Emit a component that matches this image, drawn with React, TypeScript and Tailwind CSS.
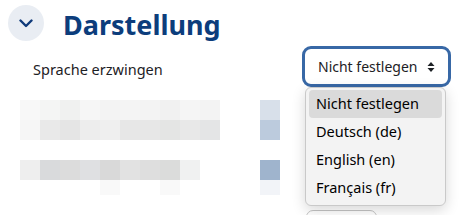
import React from "react";

const row1 = ["#f8f8f8", "#f4f5f4", "#f0f1f0", "#f6f6f6", "#f3f3f3", "#f4f4f4", "#f3f3f3", "#f1f1f1", "#f5f5f5", "#f3f3f3"];
const row2 = ["#f6f6f6", "#e9e9e9", "#e5e5e5", "#ededed", "#efefef", "#e7e7e7", "#e7e7e7", "#e4e5e4", "#e8e8e8", "#e4e5e6"];
const row3 = ["#eeeeee", "#d9dadc", "#dcdcdc", "#dfe0e2", "#d9d9d9", "#e2e2e2", "#dedede", "#dbdcdb", "#f0f1f1", "#ffffff"];
const row4 = ["#ffffff", "#ffffff", "#ffffff", "#ffffff", "#f9f9f9", "#ffffff", "#ffffff", "#f9f9f9", "#ffffff", "#ffffff"];

function BlockRow({ colors, right, h = "h-5" }: { colors: string[]; right: string; h?: string }) {
  return (
    <div className={`flex ${h}`}>
      <div className="w-5" />
      {colors.map((c, i) => (
        <div key={i} className={`w-5 ${h}`} style={{ backgroundColor: c }} />
      ))}
      <div className="w-10" />
      <div className={`w-5 ${h}`} style={{ backgroundColor: right }} />
    </div>
  );
}

export default function App() {
  const items = ["Nicht festlegen", "Deutsch (de)", "English (en)", "Français (fr)"];
  return (
    <div
      className="relative w-[460px] h-[215px] overflow-hidden bg-white text-[#1d2125]"
      style={{ fontFamily: '"Noto Sans", "Open Sans", sans-serif' }}
    >
      {/* Header */}
      <div className="flex items-center pl-2 pt-[5px] h-[41px]">
        <div className="w-9 h-9 rounded-full bg-[#e9edf3] flex items-center justify-center">
          <svg width="14" height="9" viewBox="0 0 14 9" fill="none">
            <path d="M1.5 1.5 L7 7 L12.5 1.5" stroke="#0f3a7a" strokeWidth="2.4" strokeLinecap="round" strokeLinejoin="round" />
          </svg>
        </div>
        <h2 className="ml-[19px] mt-[3px] text-[27px] font-bold leading-none text-[#0c3d7c]">Darstellung</h2>
      </div>

      {/* Form row */}
      <div className="flex items-start mt-[5px]">
        <div className="pl-[33px] pt-[13px] text-[14.5px] leading-5 whitespace-nowrap">Sprache erzwingen</div>
        <div className="ml-auto mr-[9px] w-[149px] h-[41px] rounded-[9px] border-[3px] border-[#3868a6] bg-white flex items-center pl-[13px] pr-[13px]">
          <span className="text-[14px] text-[#1d2125] leading-none whitespace-nowrap">Nicht festlegen</span>
          <svg className="ml-auto shrink-0" width="8" height="12" viewBox="0 0 8 12">
            <path d="M4 1 L7.5 5 H0.5 Z" fill="#1d2125" />
            <path d="M4 11 L7.5 7 H0.5 Z" fill="#1d2125" />
          </svg>
        </div>
      </div>

      {/* Blurred content */}
      <div className="mt-[13px] flex flex-col">
        <BlockRow colors={row1} right="#d8e0ea" />
        <BlockRow colors={row2} right="#bccbdd" />
        <div className="h-5" />
        <BlockRow colors={row3} right="#9fb4cd" />
        <BlockRow colors={row4} right="#f2f4f8" h="h-[15px]" />
      </div>

      {/* Button below */}
      <div className="absolute left-[306px] top-[210px] w-[71px] h-8 rounded-[7px] border border-[#c4c4c4] bg-white" />

      {/* Dropdown */}
      <div className="absolute left-[305px] top-[87px] w-[141px] h-[119px] rounded-[6px] border border-[#c9c9c9] bg-[#f3f3f3] shadow-[0_4px_14px_rgba(0,0,0,0.16)] px-[3px] pt-[2px]">
        {items.map((t, i) => (
          <div
            key={t}
            className={`h-7 flex items-center pl-[7px] rounded-[4px] text-[14.5px] text-black whitespace-nowrap ${i === 0 ? "bg-[#dadada]" : ""}`}
          >
            {t}
          </div>
        ))}
      </div>
    </div>
  );
}
